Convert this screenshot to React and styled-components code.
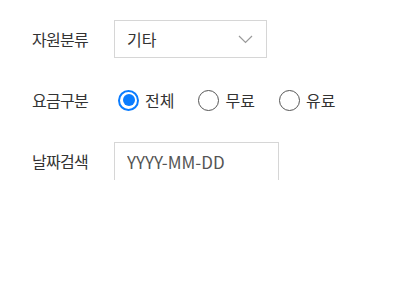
import React, { useState } from 'react';
import styled, { createGlobalStyle } from 'styled-components';

const GlobalStyle = createGlobalStyle`
  html, body {
    margin: 0;
    padding: 0;
    background: #fff;
  }
  body {
    font-family: "Noto Sans CJK KR", "Noto Sans", sans-serif;
    color: #333;
  }
`;

const Form = styled.div`
  display: flex;
  flex-direction: column;
  gap: 23px;
  padding: 20px 0 0 32px;
`;

const Row = styled.div`
  display: flex;
  align-items: center;
  height: 38px;
`;

const Label = styled.span`
  width: 82px;
  font-size: 16px;
  color: #333;
  letter-spacing: -0.7px;
`;

const Select = styled.div`
  box-sizing: border-box;
  width: 153px;
  height: 38px;
  border: 1px solid #d6d6d6;
  display: flex;
  align-items: center;
  justify-content: space-between;
  padding: 0 13px 0 12px;
  font-size: 16px;
  color: #333;
`;

const Radios = styled.div`
  display: flex;
  align-items: center;
  gap: 24px;
  margin-left: 4px;
`;

const RadioItem = styled.label`
  display: flex;
  align-items: center;
  gap: 6px;
  font-size: 16px;
  color: #333;
  cursor: pointer;
`;

const Circle = styled.span`
  box-sizing: border-box;
  width: 21px;
  height: 21px;
  border-radius: 50%;
  border: ${({ $on }) => ($on ? '2px solid #0a7cff' : '1px solid #555')};
  display: flex;
  align-items: center;
  justify-content: center;

  &::after {
    content: '';
    display: ${({ $on }) => ($on ? 'block' : 'none')};
    width: 12px;
    height: 12px;
    border-radius: 50%;
    background: #0a7cff;
  }
`;

const DateInput = styled.input`
  box-sizing: border-box;
  width: 165px;
  height: 39px;
  border: 1px solid #d6d6d6;
  padding: 0 12px;
  font-family: "Noto Sans CJK KR", "Noto Sans", sans-serif;
  font-size: 17px;
  color: #333;
  outline: none;

  &::placeholder {
    color: #555;
  }
`;

function Chevron() {
  return (
    <svg width="15" height="9" viewBox="0 0 15 9" fill="none">
      <path d="M1 1l6.5 6.5L14 1" stroke="#9a9a9a" strokeWidth="1.2" />
    </svg>
  );
}

export default function App() {
  const [fee, setFee] = useState('전체');
  const options = ['전체', '무료', '유료'];

  return (
    <>
      <GlobalStyle />
      <Form>
        <Row>
          <Label>자원분류</Label>
          <Select>
            <span>기타</span>
            <Chevron />
          </Select>
        </Row>
        <Row>
          <Label>요금구분</Label>
          <Radios>
            {options.map((o) => (
              <RadioItem key={o} onClick={() => setFee(o)}>
                <Circle $on={fee === o} />
                {o}
              </RadioItem>
            ))}
          </Radios>
        </Row>
        <Row>
          <Label>날짜검색</Label>
          <DateInput placeholder="YYYY-MM-DD" />
        </Row>
      </Form>
    </>
  );
}
